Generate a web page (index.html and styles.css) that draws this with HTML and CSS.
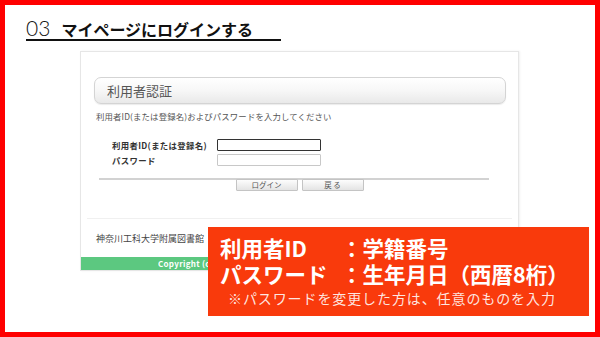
FILE: index.html
```html
<!DOCTYPE html>
<html lang="ja">
<head>
<meta charset="utf-8">
<link rel="stylesheet" href="styles.css">
</head>
<body>
<div class="frame">
  <div class="title">
    <span class="num">03</span>
    <span class="ttl">マイページにログインする</span>
  </div>
  <div class="shot">
    <div class="inner">
      <div class="panel-head">利用者認証</div>
      <p class="lead">利用者ID(または登録名)およびパスワードを入力してください</p>
      <div class="form">
        <label class="lbl">利用者ID(または登録名)</label>
        <div class="inp inp-focus"></div>
        <label class="lbl">パスワード</label>
        <div class="inp"></div>
      </div>
      <div class="rule"></div>
      <div class="btns">
        <span class="btn">ログイン</span>
        <span class="btn">戻 る</span>
      </div>
    </div>
    <div class="foot">
      <div class="foot-name">神奈川工科大学附属図書館</div>
    </div>
    <div class="copy"><span class="copy-text">Copyright (c) Kanagawa Institute of Technology. All Rights Reserved.</span></div>
  </div>
  <div class="note">
    <div class="row"><span class="k">利用者ID</span><span class="v">：学籍番号</span></div>
    <div class="row"><span class="k">パスワード</span><span class="v">：生年月日（西暦8桁）</span></div>
    <div class="sub">※パスワードを変更した方は、任意のものを入力</div>
  </div>
</div>
</body>
</html>
```
FILE: styles.css
```css
html, body { margin: 0; padding: 0; background: #fff; }
.frame {
  width: 600px; height: 337px; box-sizing: border-box;
  border: 5px solid #ff0000; position: relative; overflow: hidden;
  font-family: "Noto Sans CJK JP", "Noto Sans", sans-serif;
}
.title {
  margin: 12px 0 0 21px; width: 255px;
  border-bottom: 2px solid #111;
  display: flex; align-items: baseline; gap: 11px;
  height: 24px; box-sizing: border-box;
}
.num { font-family: "Lato", "Liberation Sans", sans-serif; font-weight: 300; font-size: 21px; color: #111; line-height: 22px; }
.ttl { font-weight: 700; font-size: 16px; color: #111; line-height: 22px; }

.shot {
  margin: 10px 0 0 75px; width: 439px; height: 220px; box-sizing: border-box;
  border: 1px solid #e6e6e6; box-shadow: 1px 0 2px rgba(0,0,0,0.06);
  display: flex; flex-direction: column; background: #fff;
}
.inner { padding: 25px 12px 0 13px; }
.panel-head {
  height: 27px; box-sizing: border-box; border: 1px solid #d4d4d4; border-radius: 7px;
  background: linear-gradient(#ffffff, #f7f7f7 50%, #e9e9e9);
  box-shadow: 0 1px 1px rgba(0,0,0,0.08);
  font-size: 13px; color: #555; line-height: 25px; padding-left: 12px;
}
.lead { margin: 6px 0 0 2px; font-size: 8.4px; letter-spacing: 0.15px; line-height: 12px; color: #555; }
.form {
  margin: 17px 0 0 18px; display: grid; grid-template-columns: 105px 104px;
  row-gap: 3px; align-items: center;
}
.lbl { font-size: 8.4px; letter-spacing: 0.35px; font-weight: 700; color: #333; line-height: 12px; white-space: nowrap; }
.inp { height: 12px; box-sizing: border-box; border: 1px solid #c8c8c8; border-radius: 1px; background: #fff; }
.inp-focus { border-color: #333; }
.rule { margin: 12px 17px 0 5px; height: 2px; background: #d2d2d2; }
.btns { display: flex; justify-content: center; gap: 4px; margin-top: -1px; margin-left: -1px; }
.btn {
  width: 62px; height: 12px; box-sizing: border-box; border: 1px solid #c4c4c4; border-radius: 1px;
  background: linear-gradient(#fdfdfd, #e4e4e4);
  font-size: 7.5px; line-height: 10px; color: #555; text-align: center;
}
.foot { margin: 27px 6px 0 6px; border-top: 1px solid #f0f0f0; padding: 14px 0 0 9px; flex: 1; }
.foot-name { font-size: 9px; line-height: 12px; color: #444; white-space: nowrap; }
.copy {
  height: 13px; background: #5cc880; padding-left: 77px;
  display: flex;
}
.copy-text {
  width: 50px; overflow: hidden; white-space: nowrap;
  color: #fff; font-size: 8px; font-weight: 700; line-height: 13px; letter-spacing: 0.3px;
}

.note {
  position: absolute; left: 203px; top: 222px; width: 381px; height: 89px; box-sizing: border-box;
  background: #f93a0c; color: #fff; padding: 8px 0 0 12px;
}
.row { display: flex; font-size: 21.5px; font-weight: 700; line-height: 26px; white-space: nowrap; }
.k { width: 121px; flex: none; }
.sub { margin: 3px 0 0 8px; font-size: 14px; line-height: 17px; letter-spacing: 0.9px; color: rgba(255,255,255,0.88); white-space: nowrap; }
```
